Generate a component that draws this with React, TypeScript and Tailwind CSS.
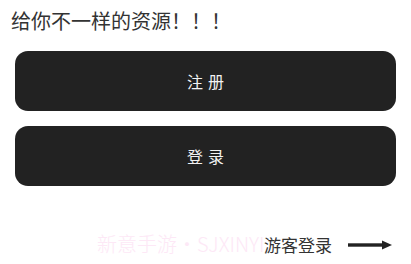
import React from "react";

export default function App() {
  const font = { fontFamily: '"Noto Sans CJK SC", "Noto Sans", sans-serif' };
  return (
    <div className="w-[411px] h-[264px] bg-white overflow-hidden" style={font}>
      <div className="pl-[11px] pt-[7px] text-[20px] leading-[28px] text-[#333333]">
        给你不一样的资源！！！
      </div>
      <div className="mx-[15px] mt-[16px] flex flex-col gap-[15px]">
        <button className="h-[60px] w-full rounded-[13px] bg-[#222222] text-[16px] text-[#f2f2f2] tracking-[5px] pl-[5px]">
          注册
        </button>
        <button className="h-[60px] w-full rounded-[13px] bg-[#222222] text-[16px] text-[#f2f2f2] tracking-[5px] pl-[5px]">
          登录
        </button>
      </div>
      <div className="relative mt-[47px] h-[24px] flex items-center justify-end pr-[19px]">
        <div className="absolute left-[97px] top-[-3px] text-[20px] leading-[28px] font-light text-[#fde8f6] whitespace-nowrap">
          新意手游・SJXINYI
        </div>
        <span className="relative z-10 text-[17px] leading-[24px] text-[#333333]">
          游客登录
        </span>
        <svg className="relative z-10 ml-[16px]" width="44" height="10" viewBox="0 0 44 10">
          <rect x="0" y="3.3" width="36" height="3.4" fill="#222222" />
          <polygon points="34,0.5 44,5 34,9.5" fill="#222222" />
        </svg>
      </div>
    </div>
  );
}
